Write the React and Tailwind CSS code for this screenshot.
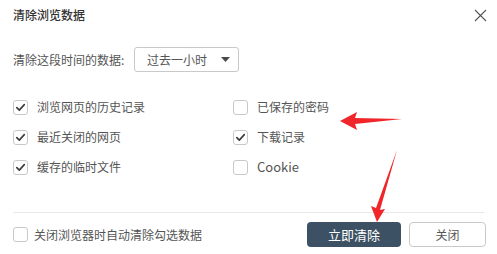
import React from "react";

function Box({ checked }) {
  return (
    <div className="w-[15px] h-[15px] border border-[#c9c9c9] rounded-[3px] bg-white flex items-center justify-center shrink-0">
      {checked && (
        <svg width="11" height="11" viewBox="0 0 11 11">
          <path d="M1.8 5.6 L4.3 8.1 L9.3 2.6" fill="none" stroke="#3a3a3a" strokeWidth="1.6" strokeLinecap="round" strokeLinejoin="round" />
        </svg>
      )}
    </div>
  );
}

function Item({ checked, label, latin }) {
  return (
    <div className="h-[30px] flex items-center gap-[9px]">
      <Box checked={checked} />
      <span className={latin ? "text-[13px] text-[#555]" : "text-[12px] text-[#555]"}>{label}</span>
    </div>
  );
}

export default function App() {
  return (
    <div
      className="w-[497px] h-[254px] bg-white relative overflow-hidden"
      style={{ fontFamily: '"Microsoft YaHei", "Noto Sans CJK SC", "Noto Sans", sans-serif' }}
    >
      <div className="px-[13px]">
        <div className="h-[30px] flex items-center justify-between">
          <span className="text-[12px] font-medium text-[#333]">清除浏览数据</span>
          <svg width="13" height="13" viewBox="0 0 13 13" className="mr-[-3px]">
            <path d="M1 1 L12 12 M12 1 L1 12" stroke="#555" strokeWidth="1.1" />
          </svg>
        </div>

        <div className="mt-[17px] h-[25px] flex items-center">
          <span className="text-[12px] text-[#555] w-[121px]">清除这段时间的数据:</span>
          <div className="w-[105px] h-[25px] border border-[#c9c9c9] rounded-[3px] flex items-center justify-between pl-[12px] pr-[8px]">
            <span className="text-[12px] text-[#555]">过去一小时</span>
            <svg width="9" height="5" viewBox="0 0 9 5">
              <path d="M0 0 L9 0 L4.5 5 Z" fill="#4a4a4a" />
            </svg>
          </div>
        </div>

        <div className="mt-[20px] grid grid-cols-[220px_1fr]">
          <div className="flex flex-col">
            <Item checked label="浏览网页的历史记录" />
            <Item checked label="最近关闭的网页" />
            <Item checked label="缓存的临时文件" />
          </div>
          <div className="flex flex-col">
            <Item checked={false} label="已保存的密码" />
            <Item checked label="下载记录" />
            <Item checked={false} label="Cookie" latin />
          </div>
        </div>

        <div className="mt-[30px] border-t border-[#e8e8e8]" />

        <div className="mt-[9px] h-[25px] flex items-center justify-between">
          <div className="flex items-center gap-[6px]">
            <Box checked={false} />
            <span className="text-[12px] text-[#555]">关闭浏览器时自动清除勾选数据</span>
          </div>
          <div className="flex items-center gap-[8px] mr-[-2px]">
            <button className="w-[94px] h-[25px] rounded-[4px] bg-[#3c5163] text-white text-[13px] flex items-center justify-center">
              立即清除
            </button>
            <button className="w-[77px] h-[25px] rounded-[4px] bg-white border border-[#c9c9c9] text-[#555] text-[12px] flex items-center justify-center">
              关闭
            </button>
          </div>
        </div>
      </div>

      <svg className="absolute left-0 top-0 pointer-events-none" width="497" height="254" viewBox="0 0 497 254">
        <polygon points="340,121 357,112 355,118 402,119 355,124 357,130" fill="#f0262a" />
        <polygon points="377,222 371,206 376,208 397,150 380,210 385,209" fill="#f0262a" />
      </svg>
    </div>
  );
}
